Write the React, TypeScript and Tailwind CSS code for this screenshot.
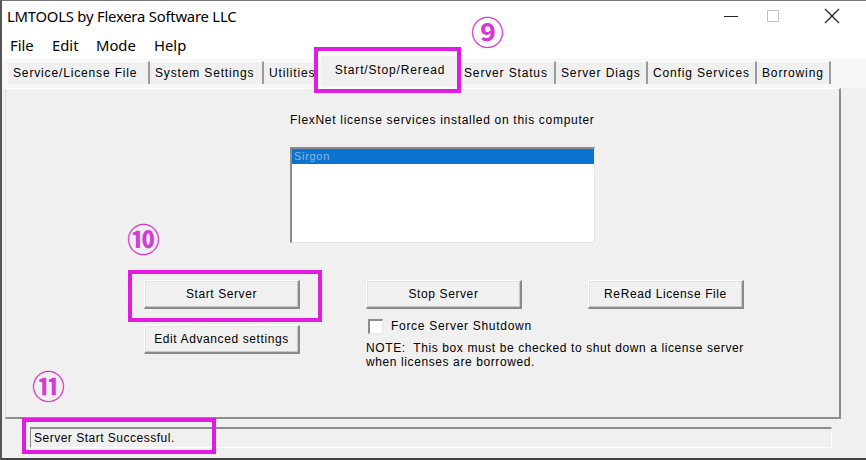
import React from "react";

const ui = "font-['Liberation_Sans',Arial,sans-serif]";

function WinButton({ label, className = "" }: { label: string; className?: string }) {
  return (
    <div
      className={`w-[156px] h-[29px] flex items-center justify-center bg-[#f0f0f0] border-t border-l border-t-white border-l-white border-r-2 border-b-2 border-r-[#8a8a8a] border-b-[#8a8a8a] shadow-[inset_-1px_-1px_0_#c8c8c8,inset_1px_1px_0_#e3e3e3] text-[12px] tracking-[0.6px] text-black ${className}`}
    >
      {label}
    </div>
  );
}

const tabsLeft = [
  { label: "Service/License File", w: "w-[142px]" },
  { label: "System Settings", w: "w-[114px]" },
  { label: "Utilities", w: "w-[54px]" },
];
const tabsRight = [
  { label: "Server Status", w: "w-[97px]" },
  { label: "Server Diags", w: "w-[92px]" },
  { label: "Config Services", w: "w-[109px]" },
  { label: "Borrowing", w: "w-[74px]" },
];

function Tab({ label, w }: { label: string; w: string }) {
  return (
    <div className={`${w} h-[23px] pl-[5px] flex items-center bg-[#f0f0f0] border-r-2 border-r-[#9a9a9a] border-t border-t-white text-[12px] tracking-[0.85px] text-black whitespace-nowrap overflow-hidden`}>
      {label}
    </div>
  );
}

export default function App() {
  return (
    <div className={`relative w-[866px] h-[460px] overflow-hidden bg-[#f0f0f0] border-l-2 border-l-[#555] border-t border-t-[#777] border-b-2 border-b-[#444] flex flex-col ${ui}`}>
      {/* title bar */}
      <div className="h-[33px] bg-white flex items-center justify-between shrink-0">
        <div className="pl-[5px] pb-[2px] text-[14.8px] text-black font-['Noto_Sans',sans-serif] tracking-[-0.2px]">
          LMTOOLS by Flexera Software LLC
        </div>
        <div className="flex items-center h-full">
          <svg width="60" height="33" viewBox="0 0 60 33">
            <line x1="24" y1="15.5" x2="38" y2="15.5" stroke="#222" strokeWidth="1" />
          </svg>
          <svg width="50" height="33" viewBox="0 0 50 33">
            <rect x="7.5" y="9.5" width="11" height="11" fill="none" stroke="#c4c4c4" strokeWidth="1" />
          </svg>
          <svg width="56" height="33" viewBox="0 0 56 33">
            <line x1="15" y1="8" x2="29" y2="22" stroke="#222" strokeWidth="1.2" />
            <line x1="29" y1="8" x2="15" y2="22" stroke="#222" strokeWidth="1.2" />
          </svg>
        </div>
      </div>

      {/* menu bar */}
      <div className="h-[25px] bg-white flex items-center pl-[8px] pb-[2px] text-[14.8px] text-black font-['Noto_Sans',sans-serif] shrink-0">
        <span className="w-[42px]">File</span>
        <span className="w-[44px]">Edit</span>
        <span className="w-[58px]">Mode</span>
        <span>Help</span>
      </div>

      {/* tabs */}
      <div className="h-[29px] flex items-end pl-[6px] shrink-0 bg-[#f7f7f7]">
        <div className="flex items-end mb-[4px]">
          {tabsLeft.map((t) => (
            <Tab key={t.label} label={t.label} w={t.w} />
          ))}
          <div className="h-[30px] w-[138px] ml-[3px] mb-[-2px] flex items-center justify-center pb-[3px] bg-[#f0f0f0] text-[12px] tracking-[0.85px] text-black">
            Start/Stop/Reread
          </div>
          {tabsRight.map((t) => (
            <Tab key={t.label} label={t.label} w={t.w} />
          ))}
        </div>
      </div>

      {/* tab panel */}
      <div className="h-[331px] shrink-0 mx-[3px] mr-[25px] border-t border-t-white border-l border-l-[#dcdcdc] border-r-2 border-r-[#8c8c8c] border-b-2 border-b-[#8c8c8c] flex flex-col text-[12px] tracking-[0.7px] text-black">
        <div className="pt-[22px] pl-[284px]">FlexNet license services installed on this computer</div>
        <div className="mt-[18px] ml-[284px] w-[305px] h-[96px] bg-white border-t-2 border-l-2 border-t-[#8c8c8c] border-l-[#8c8c8c] border-r border-b border-r-[#e6e6e6] border-b-[#e6e6e6]">
          <div className="h-[15px] bg-[#0a74d0] text-[11px] leading-[15px] pl-[2px] text-[#8fb7df]">Sirgon</div>
        </div>

        <div className="mt-[37px] flex">
          <div className="ml-[138px] flex flex-col gap-[16px]">
            <WinButton label="Start Server" />
            <WinButton label="Edit Advanced settings" />
          </div>
          <div className="ml-[66px] flex flex-col">
            <div className="flex gap-[66px]">
              <WinButton label="Stop Server" />
              <WinButton label="ReRead License File" />
            </div>
            <div className="mt-[8px] flex items-center gap-[8px] ml-[2px]">
              <div className="w-[15px] h-[15px] bg-white border-t-2 border-l-2 border-t-[#8c8c8c] border-l-[#8c8c8c] border-r border-b border-r-[#e6e6e6] border-b-[#e6e6e6]" />
              <span>Force Server Shutdown</span>
            </div>
            <div className="mt-[6px] leading-[14px] tracking-[0.6px]">
              NOTE:&nbsp; This box must be checked to shut down a license server
              <br />
              when licenses are borrowed.
            </div>
          </div>
        </div>
      </div>

      {/* status bar */}
      <div className="flex-1 pt-[8px] pl-[28px] pr-[34px]">
        <div className="h-[21px] border-t-2 border-t-[#8c8c8c] border-l border-l-[#8c8c8c] border-r border-b border-r-white border-b-white flex items-center pl-[3px] text-[12px] tracking-[0.5px] text-black">
          Server Start Successful.
        </div>
      </div>

      {/* annotations */}
      <div className="absolute left-[312px] top-[46px] w-[147px] h-[46px] border-[4px] border-[#e21be2]" />
      <div className="absolute left-[469px] top-[14px] text-[33px] font-bold leading-none text-[#d43ad4] font-['Noto_Sans_CJK_JP',sans-serif]">⑨</div>
      <div className="absolute left-[126px] top-[269px] w-[194px] h-[52px] border-[4px] border-[#e21be2]" />
      <div className="absolute left-[125px] top-[221px] text-[33px] font-bold leading-none text-[#d43ad4] font-['Noto_Sans_CJK_JP',sans-serif]">⑩</div>
      <div className="absolute left-[20px] top-[417px] w-[194px] h-[36px] border-[4px] border-[#e21be2]" />
      <div className="absolute left-[30px] top-[368px] text-[33px] font-bold leading-none text-[#d43ad4] font-['Noto_Sans_CJK_JP',sans-serif]">⑪</div>
    </div>
  );
}
